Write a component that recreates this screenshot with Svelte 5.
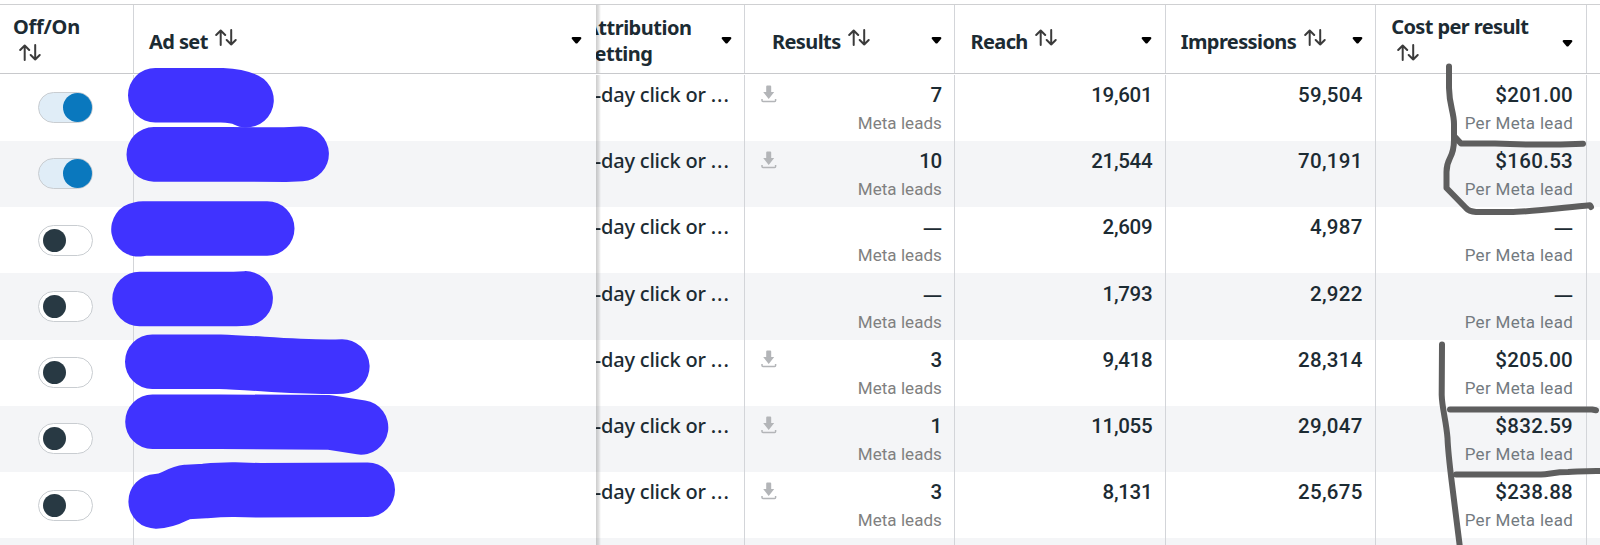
<script lang="ts">
	type Row = {
		on: boolean;
		results: string;
		reach: string;
		impressions: string;
		cost: string;
	};

	const rows: Row[] = [
		{ on: true, results: '7', reach: '19,601', impressions: '59,504', cost: '$201.00' },
		{ on: true, results: '10', reach: '21,544', impressions: '70,191', cost: '$160.53' },
		{ on: false, results: '—', reach: '2,609', impressions: '4,987', cost: '—' },
		{ on: false, results: '—', reach: '1,793', impressions: '2,922', cost: '—' },
		{ on: false, results: '3', reach: '9,418', impressions: '28,314', cost: '$205.00' },
		{ on: false, results: '1', reach: '11,055', impressions: '29,047', cost: '$832.59' },
		{ on: false, results: '3', reach: '8,131', impressions: '25,675', cost: '$238.88' }
	];

	// marker strokes that hide the ad set names
	const redactions = [
		'M155.3 95.3H222Q238 96 246.5 100.2',
		'M153.8 154.4H230L285 154.6L301.6 153.9',
		'M138.5 229.3L143 228.5H267.2',
		'M139.6 299H235L245.6 298.4',
		'M152.3 361.7H220C260 363 300 368 342.3 366.5',
		'M152.5 421.7H220L329 422.4L361 427.4',
		'M155.7 501.4C172 501 176 493 187 491.9L205 491Q222 489.4 235 489.6L260 490.3L367.7 489.8'
	];

	// pen strokes round the costs
	const penStrokes = [
		'M1449 66.5V88C1449.3 106 1454 112 1454 124V140C1454 160 1446.5 156 1446.5 172V188L1466 208Q1469 211.5 1476 212H1510C1530 212 1560 208 1590 205.2L1591 207',
		'M1455 137L1461 143.5H1495Q1535 145.5 1583 143.7',
		'M1442 344.5L1441.7 395C1442 408 1446 420 1447.5 438C1448 452 1450 468 1452 484L1460 548',
		'M1450 409.5H1592L1596 410.3',
		'M1456 474.5H1541C1550 474 1555 472 1568 472C1580 471.5 1588 470.5 1603 471'
	];
</script>

{#snippet sort()}
	<svg class="sort" width="22" height="17" viewBox="0 0 22 17">
		<path d="M5.7 16V1.6M1.2 6L5.7 1.5L10.2 6M16.2 1V15.4M11.7 11L16.2 15.5L20.7 11" />
	</svg>
{/snippet}

{#snippet caret()}
	<svg class="caret" width="11" height="7" viewBox="0 0 11 7">
		<path d="M1.6 0H9.4Q11 .6 10 2L6.7 6Q5.5 7.2 4.3 6L1 2Q0 .6 1.6 0Z" />
	</svg>
{/snippet}

<div class="table">
	<div class="row head">
		<div class="cell stacked off"><b class="t-off">Off/On</b>{@render sort()}</div>
		<div class="cell pinned"><b>Ad set</b>{@render sort()}{@render caret()}</div>
		<div class="cell attribution"><b>Attribution<br />setting</b>{@render caret()}</div>
		<div class="cell indent"><b>Results</b>{@render sort()}{@render caret()}</div>
		<div class="cell"><b>Reach</b>{@render sort()}{@render caret()}</div>
		<div class="cell"><b>Impressions</b>{@render sort()}{@render caret()}</div>
		<div class="cell">
			<div class="stacked"><b>Cost per result</b>{@render sort()}</div>
			<div class="low">{@render caret()}</div>
		</div>
		<div class="cell last"></div>
	</div>
	{#each rows as row}
		<div class="row">
			<div class="cell switch">
				<span class="toggle" class:on={row.on}><i></i></span>
			</div>
			<div class="cell pinned"></div>
			<div class="cell attribution"><span class="clicks">7-day click or <i>...</i></span></div>
			<div class="cell results">
				{#if row.results !== '—'}
					<svg class="download" width="16" height="18" viewBox="0 0 16 18">
						<path d="M5.2 1.5Q5.2 .5 6.2 .5H9.2Q10.2 .5 10.2 1.5V7H13.2L7.7 14L2.2 7H5.2Z" />
						<path class="tray" d="M1 14V15.5Q1 16.5 2 16.5H13.6Q14.6 16.5 14.6 15.5V14" />
					</svg>
				{/if}
				<div class="value">
					<span class="num" class:dash={row.results === '—'}>{row.results}</span>
					<span class="sub leads">Meta leads</span>
				</div>
			</div>
			<div class="cell"><div class="value"><span class="num">{row.reach}</span></div></div>
			<div class="cell">
				<div class="value"><span class="num wide">{row.impressions}</span></div>
			</div>
			<div class="cell">
				<div class="value">
					<span class="num wide" class:dash={row.cost === '—'}>{row.cost}</span>
					<span class="sub per">Per Meta lead</span>
				</div>
			</div>
			<div class="cell last"></div>
		</div>
	{/each}
	<div class="row">
		{#each Array(8) as _, i}
			<div class="cell" class:pinned={i === 1} class:last={i === 7}></div>
		{/each}
	</div>
	<svg class="marks" width="1600" height="545" viewBox="0 0 1600 545">
		<g class="redact">
			{#each redactions as d}
				<path {d} />
			{/each}
		</g>
		<g class="pen">
			{#each penStrokes as d}
				<path {d} />
			{/each}
		</g>
	</svg>
</div>

<style>
	.table {
		position: relative;
		box-sizing: border-box;
		width: 1600px;
		height: 545px;
		padding-top: 4px;
		overflow: hidden;
		background: #fff;
		color: #1c2b33;
		font-family: Roboto, 'Noto Sans', sans-serif;
	}
	.row {
		display: grid;
		grid-template-columns: 134px 461.5px 149.5px repeat(4, 210.4px) 13.4px;
		height: 66.25px;
		background: #fff;
	}
	.row:nth-child(odd) {
		background: #f4f5f7;
	}
	.row.head {
		box-sizing: border-box;
		height: 70px;
		margin-bottom: 0.5px;
		background: #fff;
		border-top: 1px solid #cfd0d2;
		border-bottom: 1px solid #c8c9cc;
	}
	.cell {
		display: flex;
		box-sizing: border-box;
		min-width: 0;
		padding: 0 12.5px 0 15px;
		border-right: 1px solid #d3d5d9;
	}
	.cell.last {
		padding: 0;
		border-right: 0;
	}
	.cell.pinned {
		position: relative;
		padding-right: 14px;
		border-right: 0;
	}
	/* edge of the pinned columns, cast over the scrolled ones */
	.pinned::after {
		content: '';
		position: absolute;
		top: 0;
		right: -5px;
		bottom: 0;
		z-index: 1;
		width: 5px;
		background: linear-gradient(90deg, rgba(0, 0, 0, 0.2), rgba(0, 0, 0, 0.12) 50%, transparent);
	}

	/* header */
	.head .cell {
		align-items: center;
	}
	.head b {
		margin-top: 5px;
		font: 700 20px/26px 'Noto Sans', sans-serif;
		letter-spacing: -0.6px;
		white-space: nowrap;
	}
	.head .t-off {
		letter-spacing: -0.25px;
	}
	.head .indent {
		padding-left: 27px;
	}
	.head .stacked {
		display: flex;
		flex-direction: column;
		align-items: flex-start;
		justify-content: center;
	}
	.head .stacked b {
		margin-top: 0;
	}
	.head .off {
		padding-left: 13px;
	}
	.sort {
		flex: none;
		margin: 0 0 3px 7.5px;
		fill: none;
		stroke: #3b3b3b;
		stroke-width: 2;
		stroke-linecap: round;
		stroke-linejoin: round;
	}
	.stacked .sort {
		margin: 4px 0 4px 6px;
	}
	.caret {
		flex: none;
		margin: 2px 0 0 auto;
		fill: #000;
	}
	.low {
		display: flex;
		margin: 6px 0 0 auto;
	}
	.cell.attribution {
		padding-left: 0;
		overflow: hidden;
	}
	.head .attribution b {
		margin: 3px 0 0 -10.5px;
		letter-spacing: -0.5px;
	}

	/* body */
	.cell.switch {
		padding: 17.5px 0 0 38px;
	}
	.toggle {
		box-sizing: border-box;
		display: flex;
		align-items: center;
		width: 55px;
		height: 31px;
		padding-left: 4px;
		border: 1px solid #c9cdd1;
		border-radius: 16px;
		background: #fff;
	}
	.toggle i {
		width: 23px;
		height: 23px;
		border-radius: 50%;
		background: #283943;
	}
	.toggle.on {
		justify-content: flex-end;
		padding: 0;
		background: #e0edf7;
	}
	.toggle.on i {
		width: 29px;
		height: 29px;
		background: #0a78be;
	}
	.clicks {
		margin: 7.25px 0 0 -12px;
		font: 500 20px/26px 'Noto Sans', sans-serif;
		letter-spacing: -0.2px;
		white-space: nowrap;
	}
	.clicks i {
		font-style: normal;
		letter-spacing: 1px;
	}
	.value {
		display: flex;
		flex-direction: column;
		align-items: flex-end;
		margin-left: auto;
		padding-top: 7.25px;
		white-space: nowrap;
	}
	.num {
		font-size: 20.5px;
		font-weight: 500;
		line-height: 26px;
		letter-spacing: -0.3px;
	}
	.num.wide {
		letter-spacing: 0.3px;
	}
	.num.dash {
		font: 500 19px/26px 'Noto Sans', sans-serif;
		letter-spacing: 0;
	}
	.sub {
		margin-top: 3px;
		font-size: 17px;
		line-height: 24px;
		color: #737a80;
	}
	.leads {
		letter-spacing: 0.05px;
		color: #808080;
	}
	.per {
		letter-spacing: 0.3px;
	}
	.download {
		margin: 10px 0 0 1px;
		fill: #b3b5b8;
	}
	.download .tray {
		fill: none;
		stroke: #b3b5b8;
		stroke-width: 1.5;
	}

	.marks {
		position: absolute;
		top: 0;
		left: 0;
		z-index: 2;
		fill: none;
		stroke-linecap: round;
		stroke-linejoin: round;
	}
	.redact {
		stroke: #4033ff;
		stroke-width: 54.6;
	}
	.pen {
		stroke: #5e5e5e;
		stroke-width: 6;
	}
</style>
